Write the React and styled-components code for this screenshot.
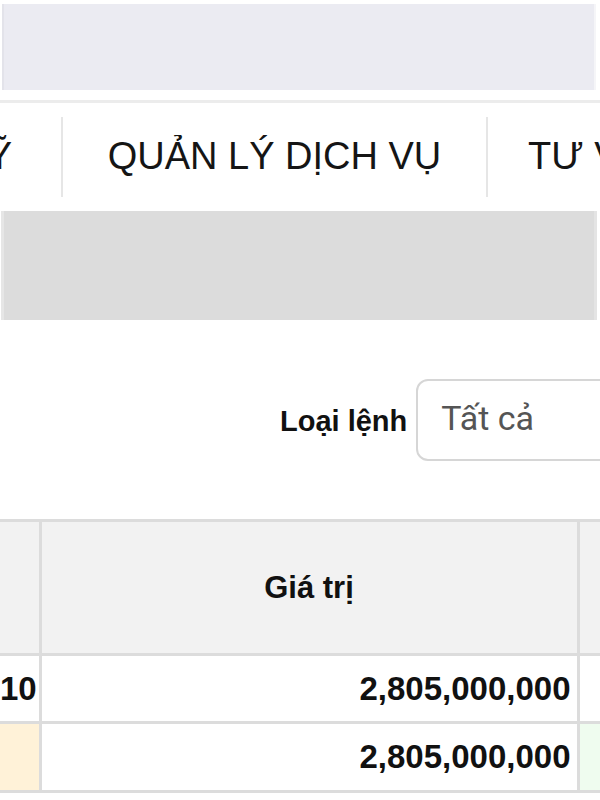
import React from "react";
import styled, { createGlobalStyle } from "styled-components";

const Global = createGlobalStyle`
  html, body { margin: 0; padding: 0; background: #fff; overflow: hidden; }
  body { font-family: "Liberation Sans", Arial, sans-serif; color: #111; }
`;

const Page = styled.div`
  width: 600px;
  height: 800px;
  overflow: hidden;
  display: flex;
  flex-direction: column;
`;

const TopBar = styled.div`
  margin: 4px 4px 0 2px;
  height: 86px;
  background: #ebebf2;
  border-left: 2px solid #e3e3ea;
  border-right: 2px solid #f5f5f8;
`;

const Divider = styled.div`
  margin-top: 10px;
  height: 3px;
  background: #ececec;
`;

const Nav = styled.nav`
  height: 107px;
  display: flex;
  align-items: center;
  white-space: nowrap;
`;

const NavItem = styled.div`
  flex: none;
  box-sizing: border-box;
  width: ${(p) => p.$w}px;
  padding: ${(p) => p.$pad || "0"};
  display: flex;
  align-items: center;
  justify-content: ${(p) => p.$align || "center"};
  font-size: 38px;
  color: #151515;
  overflow: hidden;
`;

const NavSep = styled.div`
  flex: none;
  width: 2px;
  height: 80px;
  background: #e6e6e6;
`;

const GrayBand = styled.div`
  margin: 1px 3px 0 1px;
  height: 109px;
  background: #dcdcdc;
  border-left: 3px solid #e6e6e6;
  border-right: 3px solid #e4e4e4;
`;

const FilterRow = styled.div`
  height: 199px;
  display: flex;
  align-items: center;
  padding-left: 280px;
  gap: 9px;
`;

const FilterLabel = styled.label`
  font-weight: bold;
  font-size: 29px;
  color: #111;
  white-space: nowrap;
  margin-top: 4px;
`;

const Select = styled.div`
  flex: none;
  width: 260px;
  height: 82px;
  box-sizing: border-box;
  border: 2px solid #d6d6d6;
  border-radius: 12px;
  display: flex;
  align-items: center;
  padding-left: 23px;
  padding-bottom: 4px;
  font-family: Roboto, "Liberation Sans", sans-serif;
  font-size: 34px;
  color: #555;
`;

const TableWrap = styled.div`
  overflow: hidden;
  width: 600px;
`;

const Table = styled.table`
  border-collapse: collapse;
  table-layout: fixed;
  width: 700px;
  font-family: "Liberation Sans", Arial, sans-serif;
  font-weight: bold;
  color: #111;
`;

const Th = styled.th`
  height: 131px;
  background: #f2f2f2;
  border: 3px solid #dcdcdc;
  border-left: ${(p) => (p.$first ? "none" : "3px solid #dcdcdc")};
  font-size: 31px;
  text-align: center;
  padding: 0;
`;

const Td = styled.td`
  height: ${(p) => p.$h}px;
  background: ${(p) => p.$bg || "#fff"};
  border: 3px solid #dcdcdc;
  border-left: ${(p) => (p.$first ? "none" : "3px solid #dcdcdc")};
  font-size: 33px;
  text-align: right;
  padding: 0 6px 0 0;
`;

export default function App() {
  return (
    <Page>
      <Global />
      <TopBar />
      <Divider />
      <Nav>
        <NavItem $w={61} $pad="0 49px 0 0" $align="flex-end">Ỹ</NavItem>
        <NavSep />
        <NavItem $w={423}>QUẢN LÝ DỊCH VỤ</NavItem>
        <NavSep />
        <NavItem $w={113} $pad="0 0 0 40px" $align="flex-start">
          TƯ VẤN
        </NavItem>
      </Nav>
      <GrayBand />
      <FilterRow>
        <FilterLabel>Loại lệnh</FilterLabel>
        <Select>Tất cả</Select>
      </FilterRow>
      <TableWrap>
        <Table>
          <colgroup>
            <col style={{ width: 40 }} />
            <col style={{ width: 538 }} />
            <col style={{ width: 122 }} />
          </colgroup>
          <thead>
            <tr>
              <Th $first></Th>
              <Th>Giá trị</Th>
              <Th></Th>
            </tr>
          </thead>
          <tbody>
            <tr>
              <Td $first $h={65}>10</Td>
              <Td $h={65}>2,805,000,000</Td>
              <Td $h={65}></Td>
            </tr>
            <tr>
              <Td $first $h={66} $bg="#fff2d8"></Td>
              <Td $h={66}>2,805,000,000</Td>
              <Td $h={66} $bg="#effcef"></Td>
            </tr>
          </tbody>
        </Table>
      </TableWrap>
    </Page>
  );
}
